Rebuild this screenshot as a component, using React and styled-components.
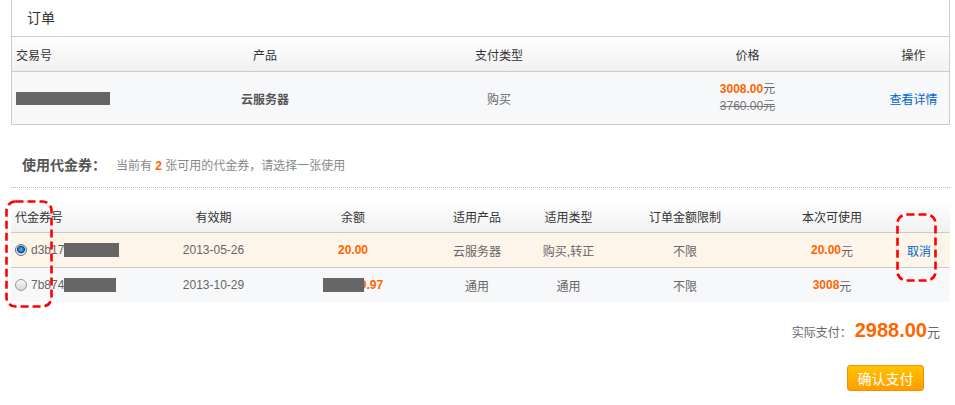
import React from "react";
import styled, { createGlobalStyle } from "styled-components";

const Global = createGlobalStyle`
  html, body { margin: 0; padding: 0; background: #fff; }
  body {
    font-family: "Liberation Sans", "Noto Sans CJK SC", sans-serif;
    font-size: 12px;
    color: #666;
  }
`;

const Page = styled.div`
  position: relative;
  width: 939px;
  padding: 0 5px 0 11px;
`;

const OrderPanel = styled.div`
  border: 1px solid #ccc;
  border-top: none;
`;

const PanelTitle = styled.div`
  height: 36px;
  line-height: 37px;
  padding-left: 15px;
  font-size: 14px;
  color: #333;
  border-bottom: 1px solid #ccc;
`;

const orderCols = "137px 232px 236px 261px 71px";
const couponCols = "141px 123px 156px 92px 91px 142px 152px 42px";

const HeadRow = styled.div`
  display: grid;
  grid-template-columns: ${(p) => p.$cols};
  height: ${(p) => p.$h}px;
  align-items: center;
  background: linear-gradient(#ffffff, #f1f1f1);
  border-bottom: 1px solid #ccc;
  color: #333;
`;

const BodyRow = styled.div`
  display: grid;
  grid-template-columns: ${(p) => p.$cols};
  height: ${(p) => p.$h}px;
  align-items: center;
  background: ${(p) => p.$bg};
  border-bottom: ${(p) => (p.$line ? "1px solid #ccc" : "none")};
`;

const Cell = styled.div`
  text-align: ${(p) => (p.$left ? "left" : "center")};
  padding-left: ${(p) => (p.$left ? "4px" : "0")};
  padding-right: ${(p) => p.$pr || 0}px;
  white-space: nowrap;
  font-weight: ${(p) => (p.$bold ? "bold" : "normal")};
  color: ${(p) => p.$color || "inherit"};
  display: flex;
  align-items: center;
  justify-content: ${(p) => (p.$left ? "flex-start" : "center")};
`;

const PriceCell = styled.div`
  display: flex;
  flex-direction: column;
  align-items: center;
  line-height: 17px;
`;

const Strike = styled.span`
  text-decoration: line-through;
  color: #777;
`;

const Orange = styled.span`
  color: #ff6600;
  font-weight: bold;
`;

const Link = styled.a`
  color: #0066cc;
  text-decoration: none;
  cursor: pointer;
`;

const Redacted = styled.span`
  display: inline-block;
  width: ${(p) => p.$w}px;
  height: ${(p) => p.$h || 13}px;
  background: #666;
  filter: blur(0.6px);
  position: relative;
  z-index: 1;
  margin-right: ${(p) => p.$mr || 0}px;
`;

const CouponHeading = styled.div`
  margin-top: 30px;
  padding: 0 0 11px 11px;
  line-height: 20px;
  border-bottom: 1px dotted #bbb;
  display: flex;
  align-items: baseline;
  gap: 10px;
`;

const HeadingLabel = styled.span`
  font-size: 14px;
  font-weight: bold;
  color: #555;
`;

const HeadingHint = styled.span`
  color: #888;
`;

const CouponTable = styled.div`
  margin-top: 12px;
`;

const Radio = styled.span`
  display: inline-block;
  box-sizing: border-box;
  width: 12px;
  height: 12px;
  border-radius: 50%;
  margin-right: 4px;
  border: 1px solid ${(p) => (p.$on ? "#5a6f86" : "#9a9a9a")};
  background: ${(p) =>
    p.$on
      ? "radial-gradient(circle at 50% 45%, #6fb6f2 0, #1f6fc0 2.5px, #0c3f7c 3.6px, #dfe6ee 4.2px, #f4f4f4 6px)"
      : "linear-gradient(#f8f8f8, #d8d8d8)"};
`;

const Code = styled.span`
  color: #666;
`;

const TotalLine = styled.div`
  margin-top: 16px;
  padding-right: 10px;
  display: flex;
  justify-content: flex-end;
  align-items: baseline;
  line-height: 24px;
`;

const TotalAmount = styled.span`
  font-size: 20px;
  font-weight: bold;
  color: #ff6600;
  margin-left: 3px;
`;

const Yuan = styled.span`
  font-size: 13px;
  color: #666;
`;

const ButtonRow = styled.div`
  margin-top: 20px;
  padding-right: 26px;
  display: flex;
  justify-content: flex-end;
`;

const PayButton = styled.button`
  width: 77px;
  height: 26px;
  border: 1px solid #f39000;
  border-radius: 3px;
  background: linear-gradient(#ffc400, #ff9d00);
  color: #fff;
  font-family: inherit;
  font-size: 14px;
  padding: 0;
  cursor: pointer;
`;

const Marker = styled.svg`
  position: absolute;
  left: ${(p) => p.$x}px;
  top: ${(p) => p.$y}px;
  pointer-events: none;
`;

function DashBox({ x, y, w, h }) {
  return (
    <Marker $x={x} $y={y} width={w} height={h} viewBox={`0 0 ${w} ${h}`}>
      <rect
        x="1.5"
        y="1.5"
        width={w - 3}
        height={h - 3}
        rx="9"
        ry="9"
        fill="none"
        stroke="#ff0000"
        strokeWidth="2.6"
        strokeDasharray="8 4"
      />
    </Marker>
  );
}

export default function App() {
  return (
    <>
      <Global />
      <Page>
        <OrderPanel>
          <PanelTitle>订单</PanelTitle>
          <HeadRow $cols={orderCols} $h={34}>
            <Cell $left>交易号</Cell>
            <Cell>产品</Cell>
            <Cell>支付类型</Cell>
            <Cell>价格</Cell>
            <Cell>操作</Cell>
          </HeadRow>
          <BodyRow $cols={orderCols} $h={52} $bg="#f7f8fa">
            <Cell $left>
              <Redacted $w={94} />
            </Cell>
            <Cell $bold $color="#555">云服务器</Cell>
            <Cell>购买</Cell>
            <PriceCell>
              <span>
                <Orange>3008.00</Orange>元
              </span>
              <Strike>3760.00元</Strike>
            </PriceCell>
            <Cell>
              <Link>查看详情</Link>
            </Cell>
          </BodyRow>
        </OrderPanel>

        <CouponHeading>
          <HeadingLabel>使用代金券：</HeadingLabel>
          <HeadingHint>
            当前有 <Orange>2</Orange> 张可用的代金券，请选择一张使用
          </HeadingHint>
        </CouponHeading>

        <CouponTable>
          <HeadRow $cols={couponCols} $h={32}>
            <Cell $left>代金券号</Cell>
            <Cell>有效期</Cell>
            <Cell>余额</Cell>
            <Cell>适用产品</Cell>
            <Cell>适用类型</Cell>
            <Cell>订单金额限制</Cell>
            <Cell>本次可使用</Cell>
            <Cell />
          </HeadRow>
          <BodyRow $cols={couponCols} $h={34} $bg="#fdf4ea" $line>
            <Cell $left>
              <Radio $on />
              <Code>d3b17</Code>
              <Redacted $w={55} $h={14} />
            </Cell>
            <Cell>2013-05-26</Cell>
            <Cell>
              <Orange>20.00</Orange>
            </Cell>
            <Cell>云服务器</Cell>
            <Cell>购买,转正</Cell>
            <Cell>不限</Cell>
            <Cell>
              <Orange>20.00</Orange>元
            </Cell>
            <Cell $pr={20}>
              <Link>取消</Link>
            </Cell>
          </BodyRow>
          <BodyRow $cols={couponCols} $h={34} $bg="#f7f8fa">
            <Cell $left>
              <Radio />
              <Code>7b874</Code>
              <Redacted $w={52} $h={14} />
            </Cell>
            <Cell>2013-10-29</Cell>
            <Cell>
              <Redacted $w={41} $h={14} $mr={-4} />
              <Orange>9.97</Orange>
            </Cell>
            <Cell>通用</Cell>
            <Cell>通用</Cell>
            <Cell>不限</Cell>
            <Cell>
              <Orange>3008</Orange>元
            </Cell>
            <Cell />
          </BodyRow>
        </CouponTable>

        <TotalLine>
          实际支付：<TotalAmount>2988.00</TotalAmount>
          <Yuan>元</Yuan>
        </TotalLine>
        <ButtonRow>
          <PayButton>确认支付</PayButton>
        </ButtonRow>

        <DashBox x={5} y={200} w={48} h={108} />
        <DashBox x={896} y={213} w={41} h={69} />
      </Page>
    </>
  );
}
